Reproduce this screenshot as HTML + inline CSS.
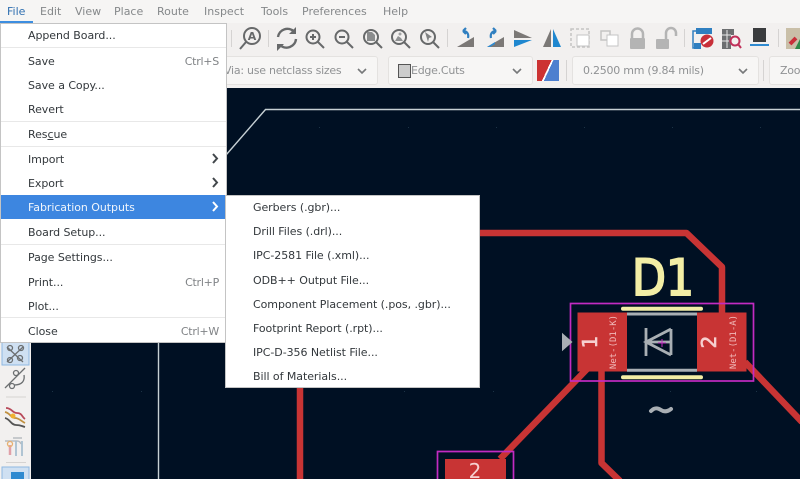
<!DOCTYPE html>
<html><head><meta charset="utf-8">
<style>
html,body{margin:0;padding:0;background:#f4f2f1}
body{width:800px;height:479px;position:relative;overflow:hidden;font-family:"DejaVu Sans","Liberation Sans",sans-serif;font-size:11px;color:#3a3f44}
#w{position:absolute;left:0;top:0;width:800px;height:479px;overflow:hidden;filter:blur(.35px)}
.a{position:absolute;white-space:nowrap}
.mb{top:5px;color:#85888a;font-size:11px;line-height:14px}
.menu{position:absolute;background:#fff;border:1px solid #c4c4c4;box-sizing:border-box}
.it{position:absolute;left:27px;white-space:nowrap;line-height:14px;color:#33383c;letter-spacing:-.06px}
.sc{position:absolute;right:7px;color:#808386;line-height:14px;letter-spacing:-.25px}
.hr{position:absolute;left:0;right:0;height:1px;background:#e8e8e8}
.combo{position:absolute;top:56px;height:29px;background:#f7f6f5;border:1px solid #e4e2e0;border-radius:3px;box-sizing:border-box;color:#909294;line-height:28px;letter-spacing:-.25px}
</style></head><body><div id="w">
<div class="a" style="left:0;top:0;width:800px;height:23px;background:#f6f5f4"></div>
<div class="a" style="left:0;top:23px;width:800px;height:65px;background:#f2f0ef"></div>
<div class="a mb" style="left:7px;color:#2f6fb0">File</div>
<div class="a" style="left:0;top:21px;width:33px;height:2px;background:#3d8ee0"></div>
<div class="a mb" style="left:40px">Edit</div>
<div class="a mb" style="left:75px">View</div>
<div class="a mb" style="left:114px">Place</div>
<div class="a mb" style="left:157px">Route</div>
<div class="a mb" style="left:204px">Inspect</div>
<div class="a mb" style="left:261px">Tools</div>
<div class="a mb" style="left:302px">Preferences</div>
<div class="a mb" style="left:383px">Help</div>

<svg class="a" style="left:0;top:23px" width="800" height="34" viewBox="0 23 800 34" fill="none">
<g stroke="#d5d3d2"><path d="M231.500 30V47M268.500 30V47M447.500 29V47M684.500 29V47M778.500 29V47"/></g>
<g stroke="#67696a" stroke-width="2">
<circle cx="252" cy="36" r="8"/><path d="M246 42l-6 7"/>
<path d="M278 37a9.500 9.500 0 0 1 16-5.500M296 39a9.500 9.500 0 0 1-16 6" stroke-width="2.400"/>
<circle cx="313" cy="37" r="6.500"/><path d="M318 42l6 6M310 37h6M313 34v6"/>
<circle cx="342" cy="37" r="6.500"/><path d="M347 42l6 6M339 37h6"/>
<circle cx="371" cy="37" r="7"/><path d="M376 42l6 6"/>
<circle cx="399" cy="37" r="7"/><path d="M404 42l6 6"/>
<circle cx="428" cy="37" r="7"/><path d="M433 42l6 6"/>
</g>
<text x="252" y="40" text-anchor="middle" font-family="DejaVu Sans, sans-serif" font-size="11" font-weight="bold" fill="#67696a">A</text>
<path d="M296 27v7h-7zM277 51v-7h7z" fill="#67696a"/>
<path d="M367 32h5l3 3v6h-8z" fill="#8a8c8d"/>
<path d="M395 41l3-5 3 2 2 3z" fill="#909293"/><circle cx="400" cy="34" r="1.500" fill="#a0a2a3"/>
<path d="M425 32l7 5-3 1-1 4z" fill="#808283"/>
<path d="M457 47l17-10v10z" fill="#7b7876"/>
<path d="M468 38c1-4-1-7-5-7m0 0l3-3m-3 3l3 3" stroke="#2f7fc0" stroke-width="2.200"/>
<path d="M487 47l17-10v10z" fill="#7b7876"/><path d="M487 47l8-5v2l-5 3z" fill="#2f8ad0"/>
<path d="M491 38c-1-4 1-7 5-7m0 0l-3-3m3 3l-3 3" stroke="#2f7fc0" stroke-width="2.200"/>
<path d="M514 30l18 8h-18z" fill="#7b7876"/><path d="M514 40h18l-18 7z" fill="#1f87cf"/>
<path d="M551 29v18h-8z" fill="#7b7876"/><path d="M553 29l8 18h-8z" fill="#1f87cf"/>
<g stroke="#c4c4c4" stroke-width="1.500"><rect x="571" y="29" width="18" height="18" stroke-dasharray="3 2"/><rect x="601" y="31" width="9" height="9"/></g>
<rect x="577" y="35" width="12" height="11" fill="#fff" stroke="#c4c4c4"/><rect x="607" y="35" width="11" height="11" fill="#fff" stroke="#c4c4c4"/>
<path d="M632 39v-5a5.500 5.500 0 0 1 11 0v5" stroke="#b4b4b4" stroke-width="2.500"/><rect x="630" y="38" width="15" height="11" fill="#b4b4b4" rx="1"/>
<path d="M666 39v-6a5 5 0 0 1 10 0v3" stroke="#b4b4b4" stroke-width="2.500"/><rect x="656" y="39" width="13" height="10" fill="#b4b4b4" rx="1"/>
<path d="M696 31h-3v17h3" stroke="#2f7fc0" stroke-width="1.500"/><rect x="696" y="28" width="16" height="6" fill="#2f7fc0"/><rect x="694" y="43" width="7" height="6" fill="#2f7fc0"/>
<circle cx="707" cy="41" r="6.500" fill="#c8303a"/><path d="M703 44l8-6" stroke="#fff" stroke-width="2"/>
<path d="M722 29h12v6h-3v14h-9z" fill="#6c6e70"/><path d="M727 30v18M722 35h9M722 41h7" stroke="#e8e8e8"/>
<circle cx="735" cy="41" r="4.500" stroke="#c0305a" stroke-width="2"/><path d="M738 44l3 4" stroke="#c0305a" stroke-width="2"/>
<rect x="753" y="28" width="13" height="14" fill="#3a3c3e"/><path d="M750 45h19" stroke="#2f8ad0" stroke-width="2"/>
<rect x="786" y="28" width="14" height="21" fill="#c9bfa8"/><path d="M790 44l6-6" stroke="#c8303a" stroke-width="4"/><path d="M795 49l5-10v10z" fill="#2f8a4a"/>
</svg>

<div class="combo" style="left:200px;width:178px;padding-left:23px">Via: use netclass sizes</div>
<div class="combo" style="left:388px;width:145px;padding-left:22px">Edge.Cuts</div>
<div class="a" style="left:398px;top:64px;width:11px;height:12px;background:#ccc;border:1px solid #555"></div>
<div class="a" style="left:537px;top:60px;width:22px;height:21px;background:linear-gradient(115deg,#cc3333 0 46%,#fff 46% 52%,#4d7fcf 52%)"></div>
<div class="combo" style="left:572px;width:187px;padding-left:10px">0.2500 mm (9.84 mils)</div>
<div class="combo" style="left:769px;width:50px;padding-left:10px">Zoom</div>
<svg class="a" style="left:0;top:54px" width="800" height="30" viewBox="0 54 800 30" fill="none" stroke="#77797a" stroke-width="1.600">
<path d="M358 69l4 4 4-4M513 69l4 4 4-4M739 69l4 4 4-4"/>
<path d="M566.500 60v21M763.500 60v21" stroke="#d5d3d2" stroke-width="1"/>
</svg>

<div class="a" style="left:0;top:88px;width:800px;height:391px;background:#001023"></div>
<div class="a" style="left:0;top:88px;width:31px;height:391px;background:#f2f0ef"></div>

<svg class="a" style="left:0;top:0" width="800" height="479" viewBox="0 0 800 479" fill="none">
<path d="M226 155L265.500 109.500H800M158.500 342V479" stroke="#c6d0d4" stroke-width="1.400"/>
<g stroke="#c83434" stroke-width="6.500" stroke-linejoin="round">
<path d="M470 233H686.500L722 267V314"/>
<path d="M300 380V479"/>
<path d="M588 368L500 459"/>
<path d="M601.500 368V463L620 481"/>
<path d="M745 362L802 422"/>
</g>
<rect x="577.500" y="312.500" width="49.500" height="59" fill="#c83434"/>
<rect x="697" y="312.500" width="49.500" height="59" fill="#c83434"/>
<rect x="445" y="459" width="61" height="25" fill="#c83434"/>
<rect x="570.500" y="303.500" width="183" height="77.500" stroke="#c22bc2" stroke-width="1.700"/>
<path d="M437.500 480V451.500H513.500V480" stroke="#c22bc2" stroke-width="1.700"/>
<path d="M623 308.700H701M623 377.300H701" stroke="#f3eea5" stroke-width="4" stroke-linecap="round"/>
<path d="M627 314H697M627 370.300H697" stroke="#a9afb4" stroke-width="3"/>
<path d="M646 328V356M671 329V355M671 329L646 342L671 355M646 342H671" stroke="#a9afb4" stroke-width="2.800"/>
<path d="M658 343h8M662 339v8" stroke="#c22bc2" stroke-width="1"/>
<path d="M563 335l8 7-8 7z" fill="#a9afb4" stroke="#a9afb4" stroke-width="2"/>
<path d="M651 411c4-4 7-3 10-1s6 2 10-1" stroke="#a9afb4" stroke-width="4" stroke-linecap="round"/>
<text x="632" y="295" font-family="DejaVu Sans, sans-serif" font-size="50" fill="#f3eea5" stroke="#f3eea5" stroke-width="2" textLength="62" lengthAdjust="spacingAndGlyphs">D1</text>
<text x="597" y="342" transform="rotate(-90 597 342)" text-anchor="middle" font-family="DejaVu Sans, sans-serif" font-size="20" fill="#f6d0d0" stroke="#f6d0d0" stroke-width=".6">1</text>
<text x="716" y="342" transform="rotate(-90 716 342)" text-anchor="middle" font-family="DejaVu Sans, sans-serif" font-size="20" fill="#f6d0d0" stroke="#f6d0d0" stroke-width=".6">2</text>
<text x="616" y="342" transform="rotate(-90 616 342)" text-anchor="middle" font-family="DejaVu Sans Mono, monospace" font-size="9" fill="#f0b8b8">Net-(D1-K)</text>
<text x="736" y="342" transform="rotate(-90 736 342)" text-anchor="middle" font-family="DejaVu Sans Mono, monospace" font-size="9" fill="#f0b8b8">Net-(D1-A)</text>
<text x="475" y="478" text-anchor="middle" font-family="DejaVu Sans, sans-serif" font-size="20" fill="#f6d0d0">2</text>
<g fill="#1c3346"><rect x="52" y="391" width="1" height="1"/><rect x="141" y="391" width="1" height="1"/><rect x="404" y="391" width="1" height="1"/><rect x="493" y="391" width="1" height="1"/><rect x="670" y="391" width="1" height="1"/><rect x="756" y="391" width="1" height="1"/><rect x="319" y="127" width="1" height="1"/><rect x="408" y="127" width="1" height="1"/><rect x="496" y="127" width="1" height="1"/><rect x="584" y="127" width="1" height="1"/><rect x="672" y="127" width="1" height="1"/><rect x="760" y="127" width="1" height="1"/></g>
<rect x="2" y="342" width="27" height="23" fill="#cfe0f2" stroke="#8fb8e2"/>
<g stroke="#6c6f71" stroke-width="1.300"><path d="M7 347L23 362M23 347L7 362"/><circle cx="10" cy="348" r="2.500"/><circle cx="21" cy="348" r="2.500"/><circle cx="10" cy="360" r="2.500"/><circle cx="20" cy="358" r="2.500"/>
<path d="M5 388L25 368"/><circle cx="16" cy="373" r="2.500"/><circle cx="12" cy="386" r="2.500"/><path d="M14 385c8 0 11-4 10-10"/></g>
<path d="M6 397H26" stroke="#d5d3d2"/>
<path d="M6 408c6 0 6 5 11 5s5 4 8 6" stroke="#b84a5a" stroke-width="1.800"/>
<path d="M5 412c5 1 6 6 10 6s6 3 10 5" stroke="#c09040" stroke-width="1.800"/>
<path d="M5 418c5 1 6 7 11 7s5 1 9 2" stroke="#555" stroke-width="1.800"/>
<circle cx="13" cy="416" r="2.500" fill="#f0b030"/>
<path d="M5 441h12q3 0 4 3M13 438h9" stroke="#b8bcc0" stroke-width="1.500"/>
<path d="M10 445v10" stroke="#e0a0a8" stroke-width="2.500"/><path d="M16 441v15M22 441v15" stroke="#a8c0d0" stroke-width="1.800"/>
<circle cx="10" cy="444" r="2.500" fill="none" stroke="#e8b070" stroke-width="1.300"/>
<path d="M6 462.500H26" stroke="#d5d3d2"/>
<rect x="2" y="467" width="27" height="14" fill="#cfe0f2" stroke="#8fb8e2"/>
<rect x="11" y="472" width="13" height="9" fill="#2f8ad0"/>
</svg>

<div class="menu" style="left:0;top:23px;width:227px;height:320px">
<div class="it" style="top:5px">Append Board...</div>
<div class="hr" style="top:23px"></div>
<div class="it" style="top:31px">Save</div><div class="sc" style="top:31px">Ctrl+S</div>
<div class="it" style="top:55px">Save a Copy...</div>
<div class="it" style="top:79px">Revert</div>
<div class="hr" style="top:97px"></div>
<div class="it" style="top:104px">Res<span style="text-decoration:underline">c</span>ue</div>
<div class="hr" style="top:122px"></div>
<div class="it" style="top:129px">Import</div>
<div class="it" style="top:153px">Export</div>
<div class="a" style="left:0;top:171px;width:225px;height:24px;background:#3d86e0"></div>
<div class="it" style="top:177px;color:#f0f5fc">Fabrication Outputs</div>
<div class="it" style="top:202px">Board Setup...</div>
<div class="hr" style="top:220px"></div>
<div class="it" style="top:227px">Page Settings...</div>
<div class="it" style="top:252px">Print...</div><div class="sc" style="top:252px">Ctrl+P</div>
<div class="it" style="top:276px">Plot...</div>
<div class="hr" style="top:293px"></div>
<div class="it" style="top:301px">Close</div><div class="sc" style="top:301px">Ctrl+W</div>
<svg class="a" style="left:209px;top:128px" width="10" height="80" viewBox="0 0 10 80" fill="none" stroke-width="2"><path d="M3 2l4 4.500-4 4.500M3 26l4 4.500-4 4.500" stroke="#42474b"/><path d="M3 50l4 4.500-4 4.500" stroke="#fff"/></svg>
</div>
<div class="menu" style="left:225px;top:195px;width:255px;height:193px">
<div class="it" style="top:5px;left:27px">Gerbers (.gbr)...</div>
<div class="it" style="top:29px;left:27px">Drill Files (.drl)...</div>
<div class="it" style="top:53px;left:27px">IPC-2581 File (.xml)...</div>
<div class="it" style="top:78px;left:27px">ODB++ Output File...</div>
<div class="it" style="top:102px;left:27px">Component Placement (.pos, .gbr)...</div>
<div class="it" style="top:126px;left:27px">Footprint Report (.rpt)...</div>
<div class="it" style="top:150px;left:27px">IPC-D-356 Netlist File...</div>
<div class="it" style="top:174px;left:27px">Bill of Materials...</div>
</div>
</div></body></html>
